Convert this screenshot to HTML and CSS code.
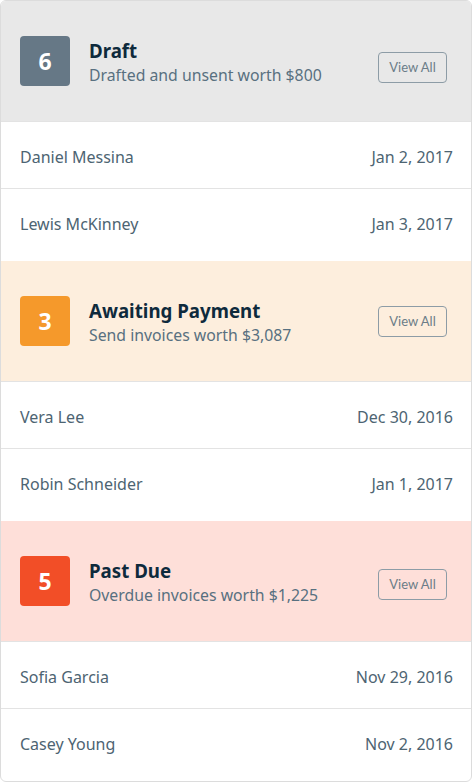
FILE: index.html
```html
<!DOCTYPE html>
<html lang="en">
<head>
    <meta charset="UTF-8">
    <meta name="viewport" content="width=device-width, initial-scale=1.0">
    <title>Invoices</title>
    <link rel="stylesheet" href="styles.css">
</head>
<body>
    <div class="card">
        <!-- Draft -->
        <div class="group">
            <div class="group-head draft">
                <div class="badge">6</div>
                <div class="head-text">
                    <h3>Draft</h3>
                    <p>Drafted and unsent worth $800</p>
                </div>
                <button class="view-all">View All</button>
            </div>
            <div class="row"><span>Daniel Messina</span><span>Jan 2, 2017</span></div>
            <div class="row last"><span>Lewis McKinney</span><span>Jan 3, 2017</span></div>
        </div>

        <!-- Awaiting -->
        <div class="group">
            <div class="group-head awaiting">
                <div class="badge">3</div>
                <div class="head-text">
                    <h3>Awaiting Payment</h3>
                    <p>Send invoices worth $3,087</p>
                </div>
                <button class="view-all">View All</button>
            </div>
            <div class="row"><span>Vera Lee</span><span>Dec 30, 2016</span></div>
            <div class="row last"><span>Robin Schneider</span><span>Jan 1, 2017</span></div>
        </div>

        <!-- Past due -->
        <div class="group">
            <div class="group-head past-due">
                <div class="badge">5</div>
                <div class="head-text">
                    <h3>Past Due</h3>
                    <p>Overdue invoices worth $1,225</p>
                </div>
                <button class="view-all">View All</button>
            </div>
            <div class="row"><span>Sofia Garcia</span><span>Nov 29, 2016</span></div>
            <div class="row last"><span>Casey Young</span><span>Nov 2, 2016</span></div>
        </div>
    </div>
</body>
</html>
```

FILE: styles.css
```css
/* General Styles */
body {
    font-family: "Noto Sans", "Open Sans", sans-serif;
    margin: 0;
    padding: 0;
    background-color: #fff;
    color: #4d6472;
}
.card {
    width: 470px;
    height: 780px;
    border: 1px solid #dcdcdc;
    border-radius: 6px;
    overflow: hidden;
    background: #fff;
}

/* Group header */
.group-head {
    display: flex;
    align-items: center;
    height: 120px;
    padding: 0 24px 0 19px;
    box-sizing: border-box;
}
.group-head.draft {
    background-color: #e8e8e8;
}
.group-head.awaiting {
    background-color: #fdeedd;
}
.group-head.past-due {
    background-color: #fedfd9;
}
.badge {
    width: 50px;
    height: 50px;
    border-radius: 4px;
    display: flex;
    align-items: center;
    justify-content: center;
    color: #fff;
    font-size: 23px;
    font-weight: bold;
    margin-right: 19px;
}
.draft .badge {
    background-color: #667886;
}
.awaiting .badge {
    background-color: #f5992b;
}
.past-due .badge {
    background-color: #f24e27;
}
.head-text {
    flex: 1;
    padding-top: 4px;
}
.head-text h3 {
    margin: 0;
    font-size: 18.7px;
    font-weight: bold;
    color: #0e2a3c;
    line-height: 24px;
}
.head-text p {
    margin: 0;
    font-size: 15.8px;
    line-height: 24px;
    color: #587080;
}
.view-all {
    font-family: Lato, sans-serif;
    font-size: 13px;
    color: #6b7d88;
    background: transparent;
    border: 1px solid #8d9ca6;
    border-radius: 4px;
    width: 69px;
    height: 31px;
    padding: 0;
    cursor: pointer;
}
.draft .view-all {
    margin-top: 12px;
}
.past-due .view-all {
    margin-top: 6px;
}

/* Rows */
.row {
    display: flex;
    justify-content: space-between;
    align-items: flex-start;
    height: 67px;
    padding: 24px 18px 0 19px;
    border-top: 1px solid #e3e3e3;
    box-sizing: border-box;
    font-size: 16px;
    line-height: 22px;
    color: #4d6472;
}
.row.last {
    height: 73px;
}
```
